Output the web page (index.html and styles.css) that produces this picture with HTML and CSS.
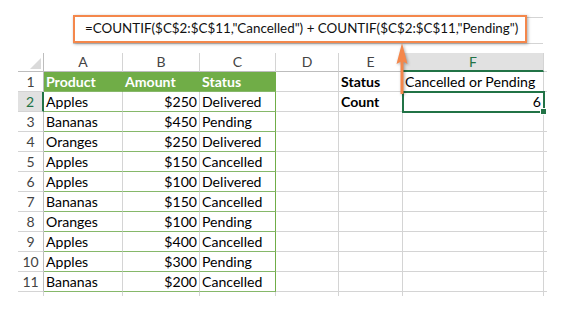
FILE: index.html
```html
<!DOCTYPE html>
<html>
<head>
<meta charset="utf-8">
<link rel="stylesheet" href="styles.css">
</head>
<body>
<div class="sheet">
  <div class="fbar"><div class="fbox">=COUNTIF($C$2:$C$11,"Cancelled") + COUNTIF($C$2:$C$11,"Pending")</div></div>
  <div class="grid">
    <div class="c corner"></div><div class="c ch">A</div><div class="c ch">B</div><div class="c ch">C</div><div class="c ch">D</div><div class="c ch">E</div><div class="c ch sel">F</div><div class="c tail"></div>

    <div class="c rh">1</div><div class="c th">Product</div><div class="c th">Amount</div><div class="c th last">Status</div><div class="c"></div><div class="c b">Status</div><div class="c">Cancelled or Pending</div><div class="c tail"></div>

    <div class="c rh sel">2</div><div class="c t">Apples</div><div class="c t r">$250</div><div class="c t last">Delivered</div><div class="c"></div><div class="c b">Count</div><div class="c r active">6</div><div class="c tail"></div>

    <div class="c rh">3</div><div class="c t">Bananas</div><div class="c t r">$450</div><div class="c t last">Pending</div><div class="c"></div><div class="c"></div><div class="c"></div><div class="c tail"></div>

    <div class="c rh">4</div><div class="c t">Oranges</div><div class="c t r">$250</div><div class="c t last">Delivered</div><div class="c"></div><div class="c"></div><div class="c"></div><div class="c tail"></div>

    <div class="c rh">5</div><div class="c t">Apples</div><div class="c t r">$150</div><div class="c t last">Cancelled</div><div class="c"></div><div class="c"></div><div class="c"></div><div class="c tail"></div>

    <div class="c rh">6</div><div class="c t">Apples</div><div class="c t r">$100</div><div class="c t last">Delivered</div><div class="c"></div><div class="c"></div><div class="c"></div><div class="c tail"></div>

    <div class="c rh">7</div><div class="c t">Bananas</div><div class="c t r">$150</div><div class="c t last">Cancelled</div><div class="c"></div><div class="c"></div><div class="c"></div><div class="c tail"></div>

    <div class="c rh">8</div><div class="c t">Oranges</div><div class="c t r">$100</div><div class="c t last">Pending</div><div class="c"></div><div class="c"></div><div class="c"></div><div class="c tail"></div>

    <div class="c rh">9</div><div class="c t">Apples</div><div class="c t r">$400</div><div class="c t last">Cancelled</div><div class="c"></div><div class="c"></div><div class="c"></div><div class="c tail"></div>

    <div class="c rh">10</div><div class="c t">Apples</div><div class="c t r">$300</div><div class="c t last">Pending</div><div class="c"></div><div class="c"></div><div class="c"></div><div class="c tail"></div>

    <div class="c rh">11</div><div class="c t">Bananas</div><div class="c t r">$200</div><div class="c t last">Cancelled</div><div class="c"></div><div class="c"></div><div class="c"></div><div class="c tail"></div>

    <div class="c stub"></div><div class="c stub"></div><div class="c stub"></div><div class="c stub"></div><div class="c stub"></div><div class="c stub"></div><div class="c stub"></div><div class="c stub none"></div>
  </div>
  <svg class="arrow" width="20" height="60" viewBox="0 0 20 60">
    <line x1="9" y1="18" x2="9" y2="53" stroke="#f4874b" stroke-width="3"/>
    <polygon points="9,2 14.5,23 9,20 3.5,23" fill="#f4874b"/>
  </svg>
</div>
</body>
</html>
```
FILE: styles.css
```css
html, body {
  margin: 0;
  padding: 0;
  background: #ffffff;
}
.sheet {
  position: relative;
  width: 570px;
  height: 311px;
  padding: 17px 0 0 18px;
  box-sizing: border-box;
  font-family: Lato, "Open Sans", sans-serif;
  font-size: 14.1px;
  color: #000;
}
.fbar {
  margin-left: 55px;
  width: 470px;
  height: 25px;
  border-top: 1px solid #d4d4d4;
  border-bottom: 1px solid #d4d4d4;
}
.fbox {
  margin-top: -3px;
  width: 454px;
  height: 28px;
  box-sizing: border-box;
  border: 2px solid #f4874b;
  background: #fff;
  box-shadow: 1px 1px 3px rgba(0, 0, 0, 0.35);
  padding-left: 10px;
  font-size: 13.4px;
  line-height: 23px;
  white-space: nowrap;
  color: #111;
}
.grid {
  margin-top: 9px;
  display: grid;
  grid-template-columns: 26px 79px 77px 76px 63px 64px 141px 3px;
  grid-template-rows: 19px repeat(11, 20px) 4px;
}
.c {
  box-sizing: border-box;
  border-right: 1px solid #d4d4d4;
  border-bottom: 1px solid #d4d4d4;
  padding: 0 2px;
  line-height: 19px;
  white-space: nowrap;
  overflow: visible;
}
.corner {
  position: relative;
  border-right-color: #bdbdbd;
  border-bottom-color: #bdbdbd;
}
.corner::after {
  content: "";
  position: absolute;
  right: 2px;
  bottom: 2px;
  width: 0;
  height: 0;
  border-left: 11px solid transparent;
  border-bottom: 11px solid #dadada;
}
.ch {
  text-align: center;
  color: #444;
  font-size: 14px;
  line-height: 18px;
  border-bottom-color: #bdbdbd;
}
.ch.sel {
  background: #e1e1e1;
  color: #217346;
  border-bottom: 2px solid #217346;
}
.rh {
  text-align: center;
  color: #444;
  font-size: 14px;
  padding: 0;
  border-right-color: #bdbdbd;
}
.rh.sel {
  background: #e1e1e1;
  color: #217346;
  border-right: 2px solid #217346;
}
.th {
  background: #70ad47;
  color: #fff;
  font-weight: bold;
  border-right-color: #70ad47;
  border-bottom-color: #86b86a;
}
.t {
  border-bottom-color: #86b86a;
}
.last {
  border-right-color: #70ad47;
}
.b {
  font-weight: bold;
}
.r {
  text-align: right;
}
.active {
  position: relative;
  outline: 2px solid #217346;
  outline-offset: -1px;
}
.active::after {
  content: "";
  position: absolute;
  right: -4px;
  bottom: -4px;
  width: 5px;
  height: 5px;
  background: #217346;
  border: 1px solid #fff;
}
.tail {
  border-right: none;
  padding: 0;
}
.stub {
  border-bottom: none;
  padding: 0;
}
.stub.none {
  border-right: none;
}
.arrow {
  position: absolute;
  left: 393px;
  top: 41px;
  filter: drop-shadow(1px 1px 1.5px rgba(0, 0, 0, 0.35));
}
```
